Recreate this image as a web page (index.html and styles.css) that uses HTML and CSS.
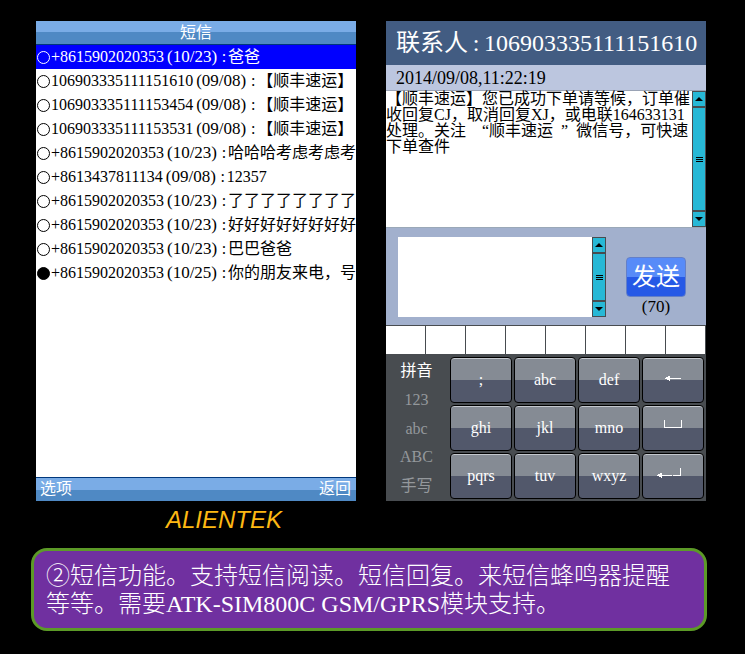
FILE: index.html
```html
<!DOCTYPE html>
<html lang="zh-CN">
<head>
    <meta charset="UTF-8">
    <meta name="viewport" content="width=device-width, initial-scale=1.0">
    <title>ALIENTEK 短信功能</title>
    <link rel="stylesheet" href="styles.css">
</head>
<body>
    <main class="screens">
        <section class="screen inbox">
            <h1 class="title-bar">短信</h1>
            <ul class="sms-list">
                <li class="sms selected"><i class="dot"></i><span class="number">+8615902020353</span><span class="date">(10/23)</span><span class="colon">:</span><span class="preview">爸爸</span></li>
                <li class="sms"><i class="dot"></i><span class="number">106903335111151610</span><span class="date">(09/08)</span><span class="colon">:</span><span class="preview">【顺丰速运】</span></li>
                <li class="sms"><i class="dot"></i><span class="number">106903335111153454</span><span class="date">(09/08)</span><span class="colon">:</span><span class="preview">【顺丰速运】</span></li>
                <li class="sms"><i class="dot"></i><span class="number">106903335111153531</span><span class="date">(09/08)</span><span class="colon">:</span><span class="preview">【顺丰速运】</span></li>
                <li class="sms"><i class="dot"></i><span class="number">+8615902020353</span><span class="date">(10/23)</span><span class="colon">:</span><span class="preview">哈哈哈考虑考虑考</span></li>
                <li class="sms"><i class="dot"></i><span class="number">+8613437811134</span><span class="date">(09/08)</span><span class="colon">:</span><span class="preview">12357</span></li>
                <li class="sms"><i class="dot"></i><span class="number">+8615902020353</span><span class="date">(10/23)</span><span class="colon">:</span><span class="preview">了了了了了了了了</span></li>
                <li class="sms"><i class="dot"></i><span class="number">+8615902020353</span><span class="date">(10/23)</span><span class="colon">:</span><span class="preview">好好好好好好好好</span></li>
                <li class="sms"><i class="dot"></i><span class="number">+8615902020353</span><span class="date">(10/23)</span><span class="colon">:</span><span class="preview">巴巴爸爸</span></li>
                <li class="sms unread"><i class="dot"></i><span class="number">+8615902020353</span><span class="date">(10/25)</span><span class="colon">:</span><span class="preview">你的朋友来电，号</span></li>
            </ul>
            <div class="soft-keys">
                <button type="button">选项</button>
                <button type="button">返回</button>
            </div>
        </section>

        <section class="screen reader">
            <h2 class="contact">联系人<span class="colon">:</span>106903335111151610</h2>
            <div class="time">2014/09/08,11:22:19</div>
            <div class="message">
                <p class="message-text">【顺丰速运】您已成功下单请等候，订单催<br>收回复CJ，取消回复XJ，或电联164633131<br>处理。关注&nbsp;&nbsp;&nbsp;&nbsp;“顺丰速运&nbsp;&nbsp;”&nbsp;&nbsp;微信号，可快速<br>下单查件</p>
                <div class="scrollbar">
                    <button type="button" aria-label="上"><svg width="8" height="4" viewBox="0 0 8 4"><path d="M4 0 8 4H0z"/></svg></button>
                    <div class="thumb"><svg width="7" height="5" viewBox="0 0 7 5"><path d="M0 0h7v1H0zM0 2h7v1H0zM0 4h7v1H0z"/></svg></div>
                    <button type="button" aria-label="下"><svg width="8" height="4" viewBox="0 0 8 4"><path d="M0 0h8L4 4z"/></svg></button>
                </div>
            </div>
            <div class="compose">
                <div class="reply">
                    <textarea class="reply-text" aria-label="回复"></textarea>
                    <div class="scrollbar">
                        <button type="button" aria-label="上"><svg width="8" height="4" viewBox="0 0 8 4"><path d="M4 0 8 4H0z"/></svg></button>
                        <div class="thumb"><svg width="7" height="5" viewBox="0 0 7 5"><path d="M0 0h7v1H0zM0 2h7v1H0zM0 4h7v1H0z"/></svg></div>
                        <button type="button" aria-label="下"><svg width="8" height="4" viewBox="0 0 8 4"><path d="M0 0h8L4 4z"/></svg></button>
                    </div>
                </div>
                <div class="send-box">
                    <button type="button" class="send">发送</button>
                    <span class="remain">(70)</span>
                </div>
            </div>
            <div class="candidates">
                <span></span><span></span><span></span><span></span><span></span><span></span><span></span><span></span>
            </div>
            <div class="keyboard">
                <div class="modes">
                    <button type="button" class="active">拼音</button>
                    <button type="button">123</button>
                    <button type="button">abc</button>
                    <button type="button">ABC</button>
                    <button type="button">手写</button>
                </div>
                <div class="keys">
                    <button type="button">;</button>
                    <button type="button">abc</button>
                    <button type="button">def</button>
                    <button type="button" class="raised" aria-label="删除"><svg width="16" height="5" viewBox="0 0 16 5"><path d="M0 2h1V1h2V0h2v2h11v1H5v2H4V4H2V3H0z"/></svg></button>
                    <button type="button">ghi</button>
                    <button type="button">jkl</button>
                    <button type="button">mno</button>
                    <button type="button" class="raised" aria-label="空格"><svg width="18" height="12" viewBox="0 0 18 12"><path d="M0 0h1v7h16V0h1v8H0z"/></svg></button>
                    <button type="button">pqrs</button>
                    <button type="button">tuv</button>
                    <button type="button">wxyz</button>
                    <button type="button" class="raised" aria-label="回车"><svg width="32" height="13" viewBox="0 0 32 13"><path d="M0 7h1V6h2V5h2v2h10v1H5v2H4V9H2V8H0zM16 7h7V0h1v8h-8z"/></svg></button>
                </div>
            </div>
        </section>
    </main>

    <div class="brand">ALIENTEK</div>
    <p class="note">②短信功能。支持短信阅读。短信回复。来短信蜂鸣器提醒等等。需要ATK-SIM800C GSM/GPRS模块支持。</p>
</body>
</html>
```

FILE: styles.css
```css
* {
    box-sizing: border-box;
}
body {
    margin: 0;
    padding: 21px 38px 20px 31px;
    background-color: #000;
    color: #000;
    font-family: "Liberation Serif", "Noto Sans CJK SC", serif;
    font-size: 16px;
    line-height: 24px;
}
button {
    margin: 0;
    padding: 0;
    border: none;
    background: none;
    color: white;
    font: inherit;
    cursor: pointer;
}
svg {
    display: block;
    fill: currentColor;
}
.screens {
    display: grid;
    grid-template-columns: 1fr 1fr;
    gap: 30px;
    padding: 0 1px 0 5px;
}
.screen {
    display: flex;
    flex-direction: column;
    min-width: 0;
    background-color: white;
}

/* message list */
.title-bar {
    margin: 0;
    height: 24px;
    border-bottom: 1px solid #00387c;
    background: linear-gradient(#7aace6 50%, #4f89c4 50%);
    color: white;
    font-size: 16px;
    font-weight: normal;
    text-align: center;
}
.sms-list {
    flex: 1;
    margin: 0;
    padding: 0;
    list-style: none;
}
.sms {
    display: flex;
    align-items: center;
    height: 24px;
    overflow: hidden;
    white-space: nowrap;
}
.sms.selected {
    background-color: #00f;
    color: white;
}
.dot {
    flex: none;
    width: 13px;
    height: 13px;
    margin: 0 1px;
    border: 1px solid currentColor;
    border-radius: 50%;
}
.unread .dot {
    background-color: currentColor;
}
.date {
    width: 56px;
    font-size: 17px;
    text-align: center;
}
.colon {
    display: inline-block;
    width: 8px;
    text-align: center;
}
.soft-keys {
    display: flex;
    justify-content: space-between;
    height: 24px;
    padding: 0 5px 2px 4px;
    border-top: 1px solid #00387c;
    background: linear-gradient(#7aace6 50%, #4f89c4 50%);
    line-height: 20px;
}

/* message view */
.contact {
    margin: 0;
    padding-left: 10px;
    background-color: #425c82;
    color: white;
    font-size: 24px;
    font-weight: normal;
    line-height: 44px;
    white-space: nowrap;
}
.contact .colon {
    width: 16px;
}
.time {
    height: 26px;
    padding-left: 10px;
    border-bottom: 1px solid #9aa3b5;
    background-color: #bcc6df;
    font-size: 18px;
    line-height: 26px;
}
.message {
    display: flex;
    height: 136px;
}
.message-text {
    flex: 1;
    margin: 0;
    line-height: 16px;
    white-space: nowrap;
}
.scrollbar {
    display: flex;
    flex-direction: column;
    flex: none;
    width: 14px;
    border: 1px solid #484c50;
    background-color: #27b8d6;
}
.scrollbar button,
.thumb {
    display: flex;
    align-items: center;
    justify-content: center;
    height: 14px;
    color: #000;
}
.scrollbar .thumb {
    flex: 1;
    border: solid #484c50;
    border-width: 2px 0;
}
.compose {
    display: flex;
    height: 99px;
    padding: 9px 20px 8px 12px;
    border-top: 1px solid #9aa8b8;
    border-bottom: 1px solid #484c50;
    background-color: #a2b0cd;
}
.reply {
    display: flex;
    flex: 1;
    min-width: 0;
    height: 80px;
    margin-right: 20px;
}
.reply-text {
    flex: 1;
    min-width: 0;
    border: none;
    background-color: white;
    font: inherit;
    resize: none;
}
.send-box {
    display: flex;
    flex: none;
    flex-direction: column;
    width: 60px;
    padding-top: 20px;
    text-align: center;
}
.send {
    height: 40px;
    border: 1px solid #637fc8;
    border-radius: 4px;
    background: linear-gradient(#578bf8 50%, #2659e6 50%);
    font-size: 24px;
    line-height: 38px;
}
.remain {
    font-size: 17px;
    line-height: 20px;
}
.candidates {
    display: grid;
    grid-template-columns: repeat(8, 1fr);
    height: 28px;
}
.candidates span {
    border-right: 1px solid #484c50;
}

/* keyboard */
.keyboard {
    display: flex;
    padding: 3px 2px 2px 0;
    background-color: #484c50;
}
.modes {
    display: flex;
    flex-direction: column;
    justify-content: space-between;
    width: 64px;
    padding: 2px 3px 1px 0;
}
.modes button {
    color: #94989c;
}
.modes .active {
    color: white;
}
.keys {
    display: grid;
    flex: 1;
    grid-template-columns: repeat(4, 1fr);
    gap: 2px;
}
.keys button {
    display: flex;
    align-items: center;
    justify-content: center;
    height: 46px;
    border: 1px solid #000;
    border-radius: 4px;
    background: linear-gradient(#858b94 50%, #52586b 50%);
    box-shadow: inset 0 1px #c4c8ce;
}
.keys .raised {
    padding-bottom: 4px;
}

.brand {
    padding-left: 135px;
    color: #fdb813;
    font-family: "Liberation Sans", Arial, sans-serif;
    font-size: 24px;
    font-style: italic;
    line-height: 38px;
}
.note {
    margin: 9px 0 0;
    padding: 11px 12px 10px;
    border: 3px solid #5c9a27;
    border-radius: 16px;
    background-color: #7030a0;
    color: white;
    font-size: 24px;
    line-height: 28px;
    font-weight: 300;
}
```
